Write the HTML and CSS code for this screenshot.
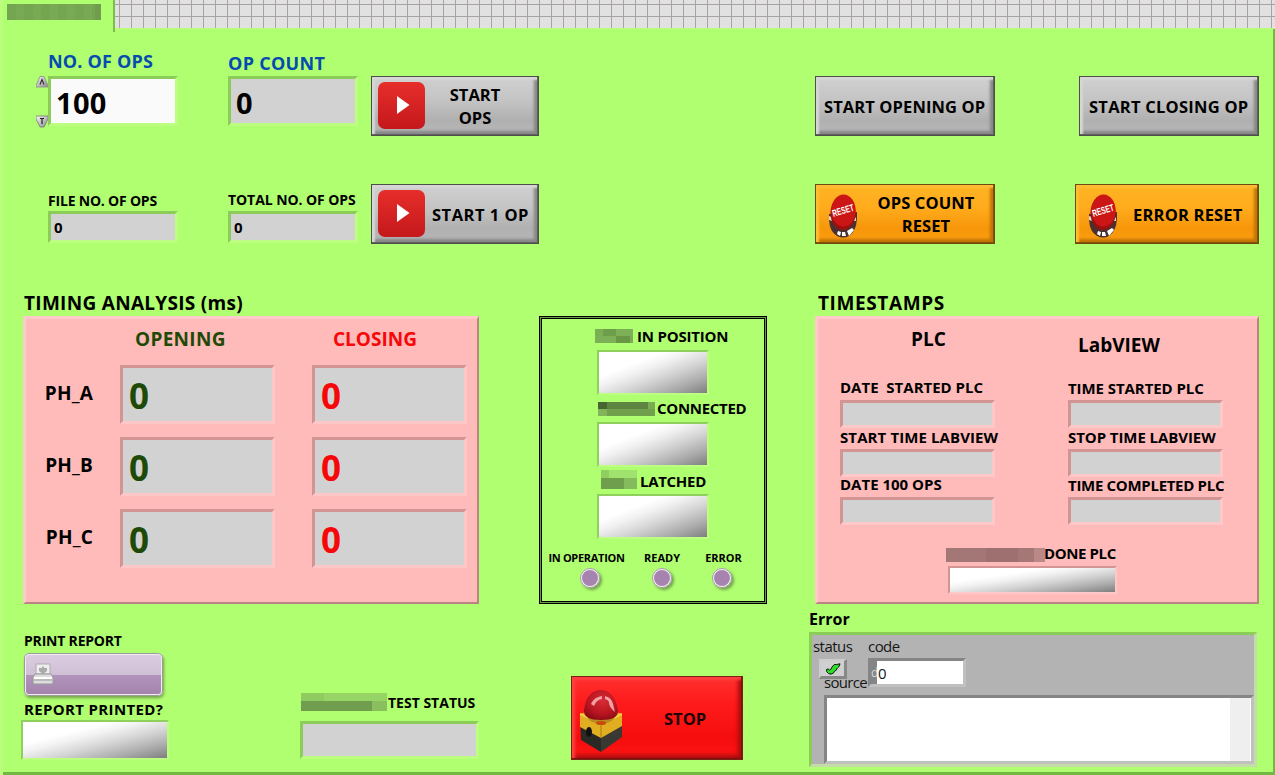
FILE: index.html
```html
<!DOCTYPE html>
<html lang="en">
<head>
<meta charset="utf-8">
<title>Operations panel</title>
<link rel="stylesheet" href="styles.css">
</head>
<body>
<svg class="defs" width="0" height="0">
  <defs>
    <linearGradient id="redTile" x1="0" y1="0" x2="0" y2="1"><stop offset="0" stop-color="#e62e2a"/><stop offset="1" stop-color="#c4181c"/></linearGradient>
    <radialGradient id="dome" cx=".55" cy=".35" r=".75"><stop offset="0" stop-color="#d82c36"/><stop offset=".6" stop-color="#b81420"/><stop offset="1" stop-color="#7c0810"/></radialGradient>
    <linearGradient id="knob" x1="0" y1="0" x2="1" y2="1"><stop offset="0" stop-color="#fafafa"/><stop offset="1" stop-color="#888"/></linearGradient>
    <symbol id="play" viewBox="0 0 47 47"><rect width="47" height="47" rx="7" fill="url(#redTile)"/><path d="M19 14v18l12.500-9z" fill="#fff"/></symbol>
    <symbol id="reset" viewBox="0 0 28 44">
      <path d="M0 20Q-1 37 8 42Q14 45 20 42Q29 36 28 18Z" fill="#4a3030"/>
      <path d="M0 22l3 1v4l-3-1zM24 27l3-4v4z" fill="#e8d8c8"/>
      <path d="M9 37l3 1-1 4-3-2zM13 38h3l1 4h-4zM18 37l5-3 2 2-5 6z" fill="#fff"/>
      <ellipse cx="14" cy="19" rx="12.500" ry="17" fill="#9c1010"/>
      <ellipse cx="14.500" cy="16.500" rx="12.200" ry="16" fill="#cc1616"/>
      <text x="4.500" y="23" transform="rotate(-17 4.500 23)" textLength="22" lengthAdjust="spacingAndGlyphs" class="reset-text">RESET</text>
    </symbol>
  </defs>
</svg>
<div class="tabs"><div class="tab"><i class="mosaic m-tab"></i></div></div>
<main class="page">
  <section class="left">
    <div class="row">
      <svg class="spinner" viewBox="0 0 12 52"><path d="M4 .500h4L12 9.500V11H0V9.500z" fill="url(#knob)" stroke="#8a8a8a" stroke-width=".8"/><path d="M4 8.500l2-5 2 5" fill="none" stroke="#333" stroke-width="1.200"/><path d="M0 40h12v3L8 51H4L0 43z" fill="url(#knob)" stroke="#777" stroke-width=".8"/><path d="M4 42.500h4M6 43v5" stroke="#222" fill="none" stroke-width="1.200"/></svg>
      <div class="field top"><span class="label blue up2"><b class="p2">NO. OF OPS</b></span><div class="well big white">100</div></div>
      <div class="field top second"><span class="label blue"><b class="p3">OP COUNT</b></span><div class="well big">0</div></div>
      <button class="btn ops"><svg class="play"><use href="#play"/></svg><span class="cap ops-cap">START<br>OPS</span></button>
    </div>
    <div class="row">
      <div class="field small first"><span class="label"><b class="n2">FILE NO. OF OPS</b></span><div class="well thin">0</div></div>
      <div class="field small second"><span class="label up1"><b class="n1">TOTAL NO. OF OPS</b></span><div class="well thin">0</div></div>
      <button class="btn ops"><svg class="play"><use href="#play"/></svg><span class="cap one-cap">START 1 OP</span></button>
    </div>
    <h2 class="title"><b class="p3">TIMING ANALYSIS (ms)</b></h2>
    <div class="panel timing">
      <span></span><span class="head green"><b class="p3">OPENING</b></span><span class="head red"><b>CLOSING</b></span>
      <span class="phase">PH_A</span><div class="well huge green">0</div><div class="well huge red">0</div>
      <span class="phase">PH_B</span><div class="well huge green">0</div><div class="well huge red">0</div>
      <span class="phase">PH_C</span><div class="well huge green">0</div><div class="well huge red">0</div>
    </div>
    <div class="bottom">
      <div class="report">
        <span class="label"><b class="n2">PRINT REPORT</b></span>
        <button class="print"><svg viewBox="0 0 22 22"><path d="M4 1h14v10H4z" fill="#eee" stroke="#aaa"/><path d="M11 3l1.500 2H15v3l-4 3-4-3V5h2.500z" fill="#aaa"/><path d="M3 11h16l2 3v6a1 1 0 0 1-1 1H2a1 1 0 0 1-1-1v-6z" fill="#ddd" stroke="#999"/><path d="M2 15h18" stroke="#fff" stroke-width="2"/><path d="M2 17h18" stroke="#999"/></svg></button>
        <span class="label l15"><b class="p4">REPORT PRINTED?</b></span>
        <div class="shine printed"></div>
      </div>
      <div class="test">
        <div class="tag"><i class="mosaic m-test"></i><b>TEST STATUS</b></div>
        <div class="well status-well"></div>
      </div>
    </div>
  </section>

  <section class="middle">
    <div class="frame">
      <div class="tag g1"><i class="mosaic m1"></i><b class="n2">IN POSITION</b></div><div class="shine"></div>
      <div class="tag g2"><i class="mosaic m2"></i><b class="n3">CONNECTED</b></div><div class="shine"></div>
      <div class="tag g3"><i class="mosaic m3"></i><b class="n3">LATCHED</b></div><div class="shine"></div>
      <div class="leds">
        <div class="led in-op"><b class="n3">IN OPERATION</b><i></i></div>
        <div class="led"><b>READY</b><i></i></div>
        <div class="led err"><b>ERROR</b><i></i></div>
      </div>
    </div>
    <button class="btn stop">
      <svg viewBox="0 0 42 64"><path d="M0 27l21 9v27L1 51z" fill="#2b2924"/><path d="M21 36l21-9v21L21 63z" fill="#3a3833"/><path d="M0 25l17-6h8l17 6v12L21 49 0 38z" fill="#e0ae20"/><path d="M0 25l21 10 21-10" fill="none" stroke="#f4d048" stroke-width="2"/><path d="M21 36v13" stroke="#a97b10"/><ellipse cx="21" cy="26" rx="14" ry="9" fill="#b88a20"/><ellipse cx="21" cy="34" rx="5" ry="2" fill="#c84a10"/><path d="M4 22Q6 2 20 1Q35 1 38 22Q38 31 21 31Q4 31 4 22z" fill="url(#dome)"/><path d="M11 15q3-7 11-8v3q-6 1-8 7zM25 7q7 2 8 8l2 8q-6-5-6-9 0-3-4-4z" fill="#f8b8b8" opacity=".85"/><ellipse cx="9" cy="43" rx="3" ry="5" fill="#111"/></svg>
      <span class="cap">STOP</span>
    </button>
  </section>

  <section class="right">
    <div class="row spread">
      <button class="btn w180"><span class="cap c1">START OPENING OP</span></button>
      <button class="btn w180"><span class="cap c2">START CLOSING OP</span></button>
    </div>
    <div class="row spread">
      <button class="btn w180 orange"><svg class="reset"><use href="#reset"/></svg><span class="cap c3">OPS COUNT<br>RESET</span></button>
      <button class="btn w184 orange"><svg class="reset"><use href="#reset"/></svg><span class="cap c4">ERROR RESET</span></button>
    </div>
    <h2 class="title ts"><b class="p5">TIMESTAMPS</b></h2>
    <div class="panel stamps">
      <div class="stamp-cols">
        <div class="stamp">
          <span class="head plc">PLC</span>
          <span class="label l15"><b>DATE&nbsp; STARTED PLC</b></span><div class="well date"></div>
          <span class="label l15 s2"><b class="p1">START TIME LABVIEW</b></span><div class="well date"></div>
          <span class="label l15 s3"><b>DATE 100 OPS</b></span><div class="well date"></div>
        </div>
        <div class="stamp">
          <span class="head lab">LabVIEW</span>
          <span class="label l15 r1"><b class="n1">TIME STARTED PLC</b></span><div class="well date"></div>
          <span class="label l15 s2"><b class="n1">STOP TIME LABVIEW</b></span><div class="well date"></div>
          <span class="label l15 r3"><b class="n3">TIME COMPLETED PLC</b></span><div class="well date"></div>
        </div>
      </div>
      <div class="tag done"><i class="mosaic m4"></i><b class="n4">DONE PLC</b></div>
      <div class="shine done-well"></div>
    </div>
    <h3 class="err-title">Error</h3>
    <div class="error">
      <div class="err-top">
        <div class="err-status"><span>status</span>
          <div class="check"><svg viewBox="0 0 16 12"><path d="M1.500 6.500Q3 5 4.500 7Q6 7 7 4Q9 .5 11.500 1.500L15 .8Q14.500 4 12.500 5Q11.500 5.500 11.500 7Q9 8 8.500 10Q6 12 3.500 10.500Q1 9 1.500 6.500z" fill="#28e028" stroke="#111"/></svg></div>
          <span class="source-label">source</span></div>
        <div class="err-code"><span>code</span><div class="code"><i>d</i><span>0</span></div></div>
      </div>
      <div class="source"><i></i></div>
    </div>
  </section>
</main>
</body>
</html>
```
FILE: styles.css
```css
* { box-sizing: border-box; }
body { margin: 0; width: 1275px; height: 775px; overflow: hidden; background: #b0ff70; color: #000; font-family: "Open Sans", "Noto Sans", sans-serif; }
h2, h3 { margin: 0; }
button { padding: 0; font: inherit; color: inherit; }
b { font-weight: 700; white-space: nowrap; display: inline-block; }
.p1 { letter-spacing: .1px; }
.p2 { letter-spacing: .2px; }
.p3 { letter-spacing: .3px; }
.p4 { letter-spacing: .35px; }
.p5 { letter-spacing: .6px; }
.n1 { letter-spacing: -.07px; }
.n2 { letter-spacing: -.2px; }
.n3 { letter-spacing: -.3px; }
.n4 { letter-spacing: -.4px; }
.defs { display: block; }
.tabs { height: 28px; background-color: #e1e1e1; background-image: linear-gradient(#a8a3a3 1px, transparent 1px), linear-gradient(90deg, #a8a3a3 1px, transparent 1px); background-size: 12px 12px; background-position: 0 4px, 11px 0; }
.tab { position: relative; z-index: 1; width: 115px; height: 32px; padding: 4px 0 0 7px; background: #b0ff70; border-right: 2px solid #7fbd4b; box-shadow: inset 3px 0 #bcfc7c; border-radius: 2px 0 0; }
.page { display: grid; grid-template-columns: 539px 228px 508px; height: 747px; background: #b0ff70; box-shadow: inset 3px 1px #bcfc7c, inset -2px -3px #73b843; }
.left, .middle, .right { display: flex; flex-direction: column; min-width: 0; }

.row { display: flex; align-items: flex-end; height: 108px; }
.field { display: flex; flex-direction: column; flex: none; width: 130px; }
.field.top { margin-bottom: 10px; }
.field.small { margin-bottom: 1px; }
.first { margin-left: 48px; }
.second { margin-left: 50px; }
.spinner { width: 12px; height: 52px; margin: 0 0 8px 36px; }
.label { height: 20px; line-height: 20px; font-size: 14px; }
.l15 { font-size: 15px; }
.blue { font-size: 18px; color: #064bb0; margin-bottom: 3px; }
.up2 { margin-bottom: 5px; }
.up1 { margin-bottom: 1px; }

.well { border: 3px solid; border-color: #8ccc59 #bcff80 #bcff80 #8ccc59; background: #d2d2d2; }
.panel .well { border-color: #d39494 #ffc8c8 #ffc8c8 #d39494; }
.big { height: 50px; line-height: 44px; padding: 2px 0 0 5px; font-size: 29px; font-weight: 700; letter-spacing: .3px; }
.white { background: #fafafa; }
.thin { height: 32px; line-height: 27px; padding-left: 3px; font-size: 15px; font-weight: 700; }
.huge { width: 155px; height: 59px; line-height: 55px; padding-left: 6px; font-size: 35px; font-weight: 700; }
.green { color: #1f4a06; }
.red { color: #f60808; }

.btn { display: flex; align-items: center; flex: none; height: 60px; border: 1px solid #4c5048; background: linear-gradient(#d0d0d0, #c4c4c4 40%, #b0b0b0 75%, #b8b8b8); box-shadow: inset -1px -1px #606060, inset 3px 3px 2px #d6d6d6, inset -4px -4px 3px #868686; font-size: 16.5px; font-weight: 700; color: #000; }
.ops { width: 168px; margin-left: 13px; }
.play { width: 47px; height: 47px; margin: -1px 0 0 6px; }
.cap { line-height: 23px; text-align: center; white-space: nowrap; }
.ops-cap { margin-left: 23px; width: 54px; }
.one-cap { margin-left: 7px; letter-spacing: .5px; }
.w180 { width: 180px; }
.w184 { width: 184px; }
.orange { background: linear-gradient(#ffb424, #ffab1c 40%, #f7960a 75%, #fba010); box-shadow: inset -1px -1px #8a5008, inset 3px 3px 2px #ffbc34, inset -4px -4px 3px #c07408; border-color: #6c4a10; }
.reset { width: 28px; height: 44px; margin: 4px 0 0 13px; }
.reset-text { font: 700 10px "Liberation Sans", sans-serif; fill: #fff; }
.c1 { margin-left: 8px; letter-spacing: .1px; }
.c2 { margin-left: 9px; letter-spacing: .25px; }
.c3 { margin-left: 20px; width: 98px; letter-spacing: .1px; }
.c4 { margin-left: 16px; letter-spacing: .2px; }

.title { height: 24px; margin: 47px 0 1px 24px; font-size: 19px; line-height: 24px; }
.panel { background: #ffbaba; border: 3px solid; border-color: #ffcaca #b88484 #b88484 #ffcaca; border-width: 3px 2px 2px 3px; }
.timing { display: grid; grid-template-columns: 94px 192px 155px; grid-template-rows: 46px 72px 72px 72px; width: 456px; height: 288px; margin-left: 23px; flex: none; }
.head { font-size: 19px; line-height: 24px; font-weight: 700; }
.head.green { padding: 8px 0 0 15px; }
.head.red { padding: 8px 0 0 21px; }
.phase { font-size: 19px; line-height: 24px; font-weight: 700; letter-spacing: .2px; text-align: right; padding: 16px 27px 0 0; }

.bottom { display: flex; padding-top: 27px; }
.report { display: flex; flex-direction: column; width: 148px; margin-left: 21px; }
.report .label { margin-left: 3px; }
.print { width: 139px; height: 43px; margin: 2px 0 3px 3px; border: 2px solid #f2ecf4; outline: 1px solid #9c9c98; outline-offset: -1px; border-radius: 5px; background: linear-gradient(#dccce0, #d0c0d6 50%, #b294bc 50%, #a384ad); box-shadow: 1px 2px 3px #78a050; display: flex; align-items: center; }
.print svg { width: 22px; height: 22px; margin-left: 6px; margin-top: -2px; }
.shine { height: 45px; border: 2px solid; border-color: #8fd05c #bcff80 #bcff80 #8fd05c; background: linear-gradient(to bottom right, #fff 30%, #f2f2f2 42%, #d4d4d4 60%, #acacac 80%, #7e7e7e); }
.printed { width: 148px; height: 40px; margin-top: 1px; }
.test { width: 180px; margin: 62px 0 0 131px; }
.tag { display: flex; align-items: flex-start; }
.tag b { line-height: 20px; font-size: 15px; }
.test .tag { height: 28px; }
.test b { font-size: 14px; margin-left: 1px; }
.status-well { width: 179px; height: 38px; }

.mosaic { display: block; flex: none; }
.m-tab { width: 94px; height: 16px; background: linear-gradient(90deg, transparent 94%, #709c4c 94%), repeating-linear-gradient(90deg, #74a550 0 9px, #78aa54 9px 17px), #74a550; }
.m-test { width: 86px; height: 18px; margin: 0 0 0 1px; background: linear-gradient(90deg, #8fcb61 27%, #96d466 27%) 0 0/100% 8px no-repeat, linear-gradient(90deg, #719e4e 82%, #8abf60 82%); }
.m1 { width: 38px; height: 14px; background: linear-gradient(90deg, #7caf54 20%, #6e9d4c 20% 55%, #7eb057 55%) 0 0/100% 7px no-repeat, linear-gradient(90deg, #7eb057 55%, #6a9746 55% 92%, #7dac55 92%); }
.m2 { width: 57px; height: 14px; background: linear-gradient(90deg, #466531 15%, #5d8541 15% 88%, #7aac53 88%) 0 0/100% 7px no-repeat, linear-gradient(90deg, #82b45a 15%, #71a04d 15%); }
.m3 { width: 36px; height: 19px; background: linear-gradient(90deg, #91ce62 22%, #9fe26d 22%) 0 0/100% 8px no-repeat, linear-gradient(90deg, #6f9e4c 65%, #85bb5c 65%); }
.m4 { width: 99px; height: 14px; background: linear-gradient(90deg, #a47777 40%, #9e7070 40% 73%, #a57777 73% 89%, #bb8888 89%); }

.middle { padding-top: 288px; }
.frame { width: 228px; height: 288px; flex: none; border: 3px double #000; padding-top: 8px; background: linear-gradient(#b0ff70, #b0ff70) padding-box, #6b9b44 border-box; }
.frame .shine { width: 112px; margin-left: 55px; }
.g1 { height: 23px; padding-left: 53px; }
.g2 { height: 27px; padding-left: 56px; }
.g3 { height: 27px; padding-left: 59px; }
.m1 { margin-top: 2px; }
.m2 { margin-top: 7px; }
.m3 { margin-top: 3px; }
.g1 b { margin: -1px 0 0 4px; }
.g2 b { margin: 3px 0 0 2px; }
.g3 b { margin: 4px 0 0 3px; }
.leds { display: grid; grid-template-columns: 96px 48px 72px; margin-top: 11px; }
.led { display: flex; flex-direction: column; align-items: center; }
.leds .led b { font-size: 11px; line-height: 16px; }
.in-op b { margin-right: 7px; }
.err b { margin-left: 3px; }
.led i { width: 20px; height: 20px; margin-top: 2px; border-radius: 50%; background: #a784b0; border: 2px solid #f6f2f6; outline: 1px solid #9aa090; outline-offset: -1px; box-shadow: 2px 2px 3px #709c50; }
.stop { width: 172px; height: 84px; margin: 72px 0 0 32px; background: linear-gradient(#ff3030, #ff1c1c 30%, #f50d0d 75%, #ff1515); box-shadow: inset -1px -1px #801010, inset 3px 3px 3px #ff4040, inset -4px -4px 4px #a80c0c; border-color: #7c2010; color: #1c0404; }
.stop svg { width: 42px; height: 64px; margin: 5px 0 0 8px; }
.stop .cap { margin-left: 42px; }

.right { padding-left: 42px; }
.spread { width: 450px; padding-left: 6px; justify-content: space-between; }
.title.ts { margin-left: 9px; }
.stamps { width: 444px; height: 288px; margin-left: 6px; flex: none; }
.stamp-cols { display: flex; padding-left: 22px; height: 229px; }
.stamp { display: flex; flex-direction: column; width: 228px; flex: none; }
.plc { margin: 8px 0 26px 71px; }
.lab { margin: 14px 0 21px 10px; }
.date { width: 155px; height: 28px; }
.stamp .label + .date { margin-top: 3px; }
.stamp .r1 + .date { margin-top: 2px; }
.stamp .s2 { margin-top: -1px; }
.stamp .s2 + .date { margin-top: 2px; }
.stamp .s3 { margin-top: -3px; }
.stamp .r3 { margin-top: -2px; }
.stamp .r3 + .date { margin-top: 2px; }
.done { padding-left: 128px; height: 18px; }
.done b { margin: -5px 0 0 -1px; }
.done-well { width: 169px; height: 28px; margin-left: 130px; border-color: #d39494 #ffc8c8 #ffc8c8 #d39494; }

.err-title { height: 24px; margin-top: 3px; font-size: 16px; line-height: 24px; }
.error { width: 448px; height: 135px; margin-top: 1px; border: 3px solid; border-color: #8ccc59 #c4dca8 #c4dca8 #8ccc59; background: #b3b3b3; color: #161616; font-size: 15px; letter-spacing: -.55px; }
.err-top { display: flex; height: 60px; padding: 1px 0 0 1px; }
.err-status { width: 55px; display: flex; flex-direction: column; }
.err-status > span, .err-code > span { display: block; line-height: 20px; height: 20px; }
.check { width: 28px; height: 20px; margin: 3px 0 0 6px; background: #d0d0d0; border: 2px solid; border-color: #ccc #888 #888 #ccc; border-width: 2px 3px 3px 2px; display: grid; place-items: center; }
.check svg { width: 16px; height: 12px; }
.err-status .source-label { margin: -7px 0 0 11px; letter-spacing: -.7px; }
.code { width: 98px; height: 29px; margin-top: 2px; border: 3px solid; border-color: #858585 #c0c0c0 #c0c0c0 #858585; background: #fff; display: flex; line-height: 24px; }
.code span { margin-left: 1px; }
.code i { width: 6px; background: #858585; color: #d8d8d8; font-style: normal; font-size: 12px; text-align: center; overflow: hidden; flex: none; }
.source { display: flex; justify-content: flex-end; width: 430px; height: 69px; margin-left: 12px; border: 3px solid; border-color: #858585 #c0c0c0 #c0c0c0 #858585; background: #fff; }
.source i { width: 20px; background: #efefef; margin-right: 1px; }
```
